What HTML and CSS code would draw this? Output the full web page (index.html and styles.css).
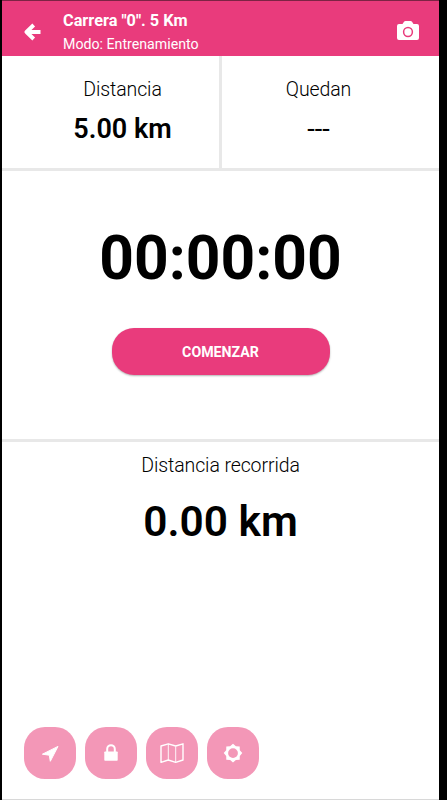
FILE: index.html
```
<!DOCTYPE html>
<html lang="es">
<head>
  <meta charset="UTF-8">
  <title>Carrera "0". 5 Km</title>
<link rel="stylesheet" href="styles.css">
</head>
<body>

<div class="app">
  <header class="header">
    <svg class="header_back" viewBox="0 0 18 18">
      <path d="M9.7 2 L2.5 9 L9.7 16 M3.5 9 H16.5" fill="none" stroke="#fff" stroke-width="3.9" stroke-linejoin="round"/>
    </svg>
    <div class="header_text">
      <h1 class="header_title">Carrera "0". 5 Km</h1>
      <p class="header_mode">Modo: Entrenamiento</p>
    </div>
    <svg class="header_camera" viewBox="0 0 22 19">
      <path d="M2 3 H5.5 L7 0.8 Q7.5 0 8.5 0 H13.5 Q14.5 0 15 .8 L16.5 3 H20 Q22 3 22 5 V17 Q22 19 20 19 H2 Q0 19 0 17 V5 Q0 3 2 3 Z" fill="#fff"/>
      <circle cx="11" cy="11" r="4.4" fill="none" stroke="#e93b7c" stroke-width="1.5"/>
    </svg>
  </header>

  <section class="stats">
    <div class="stats_cell">
      <h2 class="label">Distancia</h2>
      <p class="stats_value">5.00 km</p>
    </div>
    <div class="stats_cell">
      <h2 class="label">Quedan</h2>
      <p class="stats_value stats_value-empty">---</p>
    </div>
  </section>

  <section class="timer">
    <p class="timer_value">00:00:00</p>
    <button type="button" class="timer_start">COMENZAR</button>
  </section>

  <section class="track">
    <h2 class="label">Distancia recorrida</h2>
    <p class="track_value">0.00 km</p>
  </section>

  <nav class="tools">
    <button type="button" class="tools_btn" aria-label="Posición">
      <svg width="52" height="52" viewBox="0 0 52 52">
        <path d="M34 19.4 L26.3 34.3 L25.3 28.2 L18.4 27.2 Z" fill="#fff" stroke="#fff" stroke-linejoin="round"/>
      </svg>
    </button>
    <button type="button" class="tools_btn" aria-label="Bloquear">
      <svg width="52" height="52" viewBox="0 0 52 52">
        <rect x="19.3" y="24.5" width="13.4" height="9.3" rx=".7" fill="#fff"/>
        <path d="M22.2 25 V22 a3.8 3.8 0 0 1 7.6 0 V25" fill="none" stroke="#fff" stroke-width="2"/>
      </svg>
    </button>
    <button type="button" class="tools_btn" aria-label="Mapa">
      <svg width="52" height="52" viewBox="0 0 52 52">
        <path d="M15 19 L22.3 16.8 L29.7 19 L37 16.8 V33 L29.7 35.3 L22.3 33 L15 35.3 Z" fill="none" stroke="#fff" stroke-width="1.4" stroke-linejoin="round"/>
        <path d="M22.3 17 V33 M29.7 19.5 V35" stroke="#fff" stroke-width=".9"/>
      </svg>
    </button>
    <button type="button" class="tools_btn" aria-label="Ajustes">
      <svg width="52" height="52" viewBox="0 0 52 52">
        <path d="M26 16.8 L28.9 19.3 L32.7 19.4 L32.8 23.2 L35.3 26.1 L32.8 29 L32.7 32.8 L28.9 32.9 L26 35.4 L23.1 32.9 L19.3 32.8 L19.2 29 L16.7 26.1 L19.2 23.2 L19.3 19.4 L23.1 19.3 Z" fill="#fff"/>
        <circle cx="26" cy="26.1" r="4.9" fill="#f397b7"/>
      </svg>
    </button>
  </nav>
</div>

</body>
</html>
```
FILE: styles.css
```
body {
  margin: 0;
  background-color: #000;
  font-family: Roboto, "Liberation Sans", sans-serif;
  color: #000;
}
h1, h2, p {
  margin: 0;
}
.app {
  display: flex;
  flex-direction: column;
  width: 437px;
  height: 800px;
  margin-left: 2px;
  box-sizing: border-box;
  border-bottom: 1px solid #d8d8d8;
  background-color: #fff;
}
.header {
  display: flex;
  align-items: flex-start;
  height: 56px;
  box-sizing: border-box;
  border-top: 1px solid #7d2344;
  background-color: #e93b7c;
  color: #fff;
}
.header_back {
  width: 18px;
  height: 18px;
  margin: 22px 0 0 22px;
}
.header_text {
  flex: 1;
  margin: 10px 0 0 21px;
}
.header_title {
  font-size: 16.3px;
  line-height: 20px;
  font-weight: 700;
}
.header_mode {
  margin-top: 3px;
  font-size: 14.2px;
  line-height: 20px;
}
.header_camera {
  width: 22px;
  height: 19px;
  margin: 20px 20px 0 0;
}
.label {
  font-size: 19.5px;
  line-height: 24px;
  font-weight: 350;
  letter-spacing: -.1px;
}

.stats {
  display: flex;
  height: 115px;
  box-sizing: border-box;
  border-bottom: 3px solid #e8e8e8;
  text-align: center;
}
.stats_cell {
  width: 217px;
  box-sizing: border-box;
  padding: 22px 0 0 24px;
}
.stats_cell + .stats_cell {
  flex: 1;
  padding: 22px 24px 0 0;
  border-left: 3px solid #e8e8e8;
}
.stats_value {
  margin-top: 11px;
  font-size: 27px;
  line-height: 32px;
  font-weight: 600;
}
.stats_value-empty {
  font-weight: 400;
}

.timer {
  display: flex;
  flex-direction: column;
  align-items: center;
  height: 271px;
  box-sizing: border-box;
  border-bottom: 3px solid #e8e8e8;
}
.timer_value {
  margin-top: 52px;
  font-size: 60.5px;
  line-height: 72px;
  font-weight: 700;
}
.timer_start {
  width: 218px;
  height: 47px;
  margin-top: 33px;
  border: none;
  border-radius: 22px;
  background-color: #e93b7c;
  box-shadow: 0 1px 2px rgba(0, 0, 0, .3);
  font-family: inherit;
  font-size: 14.2px;
  font-weight: 700;
  color: #fff;
}

.track {
  flex: 1;
  padding-top: 12px;
  text-align: center;
}
.track_value {
  margin-top: 19px;
  font-size: 42.4px;
  line-height: 50px;
  font-weight: 650;
}

.tools {
  display: flex;
  gap: 9px;
  padding: 0 0 20px 22px;
}
.tools_btn {
  width: 52px;
  height: 52px;
  padding: 0;
  border: none;
  border-radius: 21px;
  background-color: #f397b7;
}
.tools_btn svg {
  display: block;
}
```
